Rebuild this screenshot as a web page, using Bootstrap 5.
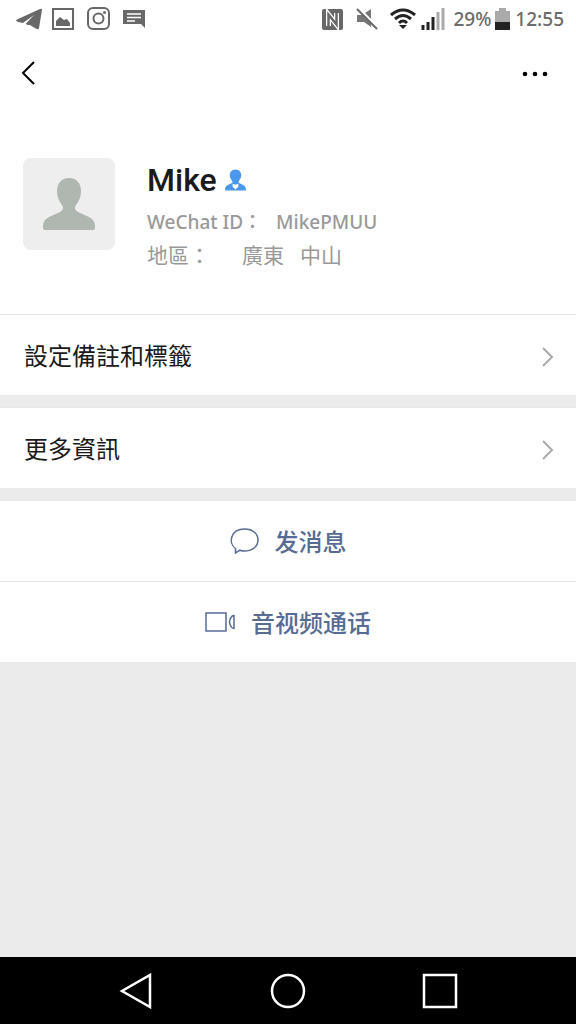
<!DOCTYPE html>
<html lang="zh-Hant">
<head>
<meta charset="utf-8">
<meta name="viewport" content="width=device-width, initial-scale=1">
<title>Mike</title>
<link href="https://cdn.jsdelivr.net/npm/bootstrap@5.3.0/dist/css/bootstrap.min.css" rel="stylesheet">
<style>
body{background:#ebebeb;color:#1a1a1a;font-family:Roboto,"Noto Sans CJK TC",sans-serif}
svg{display:block;flex:none}
.status{height:40px;padding:0 12px 2px 16px;color:#6b6b6b;font:500 19px/24px "Noto Sans",sans-serif}
.topbar{height:66px;padding:0 20px 0 12px}
.plain{border:0;background:none;padding:8px;color:#000}
.profile{padding:52px 24px 44px 23px;gap:32px}
.avatar{width:92px;height:92px;border-radius:8px;background:#eee}
.details{padding-top:2px}
.who{font-size:32px;line-height:40px;font-weight:500}
.facts{padding-top:6px;color:#999;font:500 19px/32px "Noto Sans","Noto Sans CJK TC",sans-serif}
.facts .wide{gap:14px}
.facts .region{font-family:"Noto Sans CJK TC",sans-serif;font-size:21px;font-weight:400}
.entry{height:81px;padding:4px 22px 0 24px;border-top:1px solid #e8e8e8;font-size:24px;color:#1a1a1a}
.act{height:81px;border:0;border-top:1px solid #e8e8e8;background:#fff;color:#576b95;font:500 24px/36px "Noto Sans CJK SC",sans-serif}
.gap-band{margin-top:12px}
.softkeys{height:67px;padding:0 60px}
</style>
</head>
<body>
<div class="min-vh-100 d-flex flex-column">
<header class="bg-white">
<div class="status d-flex align-items-center justify-content-between">
<div class="d-flex align-items-center gap-2">
<svg width="27" height="24" viewBox="0 0 27 24" fill="#686868"><path d="M0 13.500Q0 12.500 2 12L24 2q2-1 2 1l-3 18q-.5 2-2.500 1L14 18l-2 0-2.500-1L18 8 7 16 2 15Z"/></svg>
<svg width="24" height="24" viewBox="0 0 24 24"><path d="M2 2h20v20H2z" fill="none" stroke="#686868" stroke-width="2"/><path d="M5 19v-5l4-4 4 3 3-1 3 4v3z" fill="#686868"/></svg>
<svg class="ms-1" width="24" height="24" viewBox="0 0 24 24" fill="none" stroke="#686868" stroke-width="2"><rect x="1" y="1" width="21" height="21" rx="5"/><circle cx="11.500" cy="11.500" r="5"/><circle cx="17.500" cy="5.500" r="1.500" fill="#686868" stroke="none"/></svg>
<svg class="ms-1" width="24" height="24" viewBox="0 0 24 24"><path d="M0 3h22v18l-4-4H0z" fill="#686868"/><path d="M4 7h14M4 10.500h14M4 14h8" stroke="#fff" stroke-width="1.500"/></svg>
</div>
<div class="d-flex align-items-center">
<svg width="24" height="24" viewBox="0 0 24 24" fill="none"><rect x="1" y="2" width="21" height="21" rx="2" fill="#686868"/><path d="M7.500 19V7.500L15.500 17.500V6" stroke="#fff" stroke-width="5"/><path d="M7.500 19V7.500L15.500 17.500V6" stroke="#686868" stroke-width="2.500"/></svg>
<svg class="mx-2" width="28" height="24" viewBox="0 0 28 24"><path d="M4 8h5l9-6v18l-7-5H4z" fill="#777"/><path d="M5 1 26 22" stroke="#fff" stroke-width="3"/><path d="M4 2 24 22" stroke="#686868" stroke-width="2"/></svg>
<svg width="28" height="24" viewBox="0 0 28 24" fill="none" stroke="#222" stroke-width="3"><path d="M2 8Q14-2 26 8M6 12Q14 5 22 12M10 16Q14 12 18 16"/><path d="m10 18 4 4 4-4z" fill="#222" stroke="none"/></svg>
<svg class="ms-1" width="24" height="24" viewBox="0 0 24 24"><path d="M2 18v5M7 15v8M12 10v13" stroke="#222" stroke-width="3"/><path d="M17 5v18M22 1v22" stroke="#aaa" stroke-width="3"/></svg>
<span class="ms-2">29%</span>
<svg class="ms-1" width="16" height="24" viewBox="0 0 16 24"><path d="M0 4h4V1h7v3h4v12H0z" fill="#aaa"/><path d="M0 15h15v8H0z" fill="#222"/></svg>
<span class="ms-1">12:55</span>
</div>
</div>
<nav class="topbar d-flex align-items-center justify-content-between">
<button class="plain" aria-label="返回"><svg width="16" height="26" viewBox="0 0 16 26" fill="none" stroke="#000" stroke-width="2"><path d="M14 2 3 13l11 11"/></svg></button>
<button class="plain" aria-label="更多"><svg width="26" height="8" viewBox="0 0 26 8"><circle cx="3" cy="5" r="2.300"/><circle cx="13" cy="5" r="2.300"/><circle cx="23" cy="5" r="2.300"/></svg></button>
</nav>
</header>
<main>
<section class="profile bg-white d-flex align-items-start">
<div class="avatar d-flex align-items-center justify-content-center"><svg width="52" height="52" viewBox="0 0 52 52" fill="#b0b6b0"><path d="M26 0c8 0 12 6 12 13 0 6-2 10-5 14-2 3-1 5 2 7l11 5c4 2 6 5 6 9v2q0 2-2 2H2q-2 0-2-2v-2c0-4 2-7 6-9l11-5c3-2 4-4 2-7-3-4-5-8-5-14C14 6 18 0 26 0Z"/></svg></div>
<div class="details">
<div class="d-flex align-items-center gap-2"><h1 class="who m-0">Mike</h1><svg width="21" height="22" viewBox="0 0 22 22"><path d="M11 0c4 0 6 3 6 6 0 3-2 5-3 7 0 2 8 2 8 8 0 1 0 1-1 1H1q-1 0-1-1c0-6 8-6 8-8-1-2-3-4-3-7 0-3 2-6 6-6Z" fill="#4a98ee"/><path d="m8 15 3 1 3-1v3l-3 3-3-3z" fill="#fff"/></svg></div>
<div class="facts"><div class="wide d-flex"><span>WeChat ID：</span><span>MikePMUU</span></div>
<div class="region d-flex"><span>地區：</span><span class="ms-4 ps-2">廣東</span><span class="ms-3">中山</span></div></div>
</div>
</section>
<a href="#remark" class="entry bg-white d-flex align-items-center justify-content-between text-decoration-none"><span>設定備註和標籤</span><svg width="12" height="20" viewBox="0 0 12 20" fill="none" stroke="#aaa" stroke-width="2"><path d="m1 1 9 9-9 9"/></svg></a>
<a href="#more" class="entry gap-band bg-white d-flex align-items-center justify-content-between text-decoration-none"><span>更多資訊</span><svg width="12" height="20" viewBox="0 0 12 20" fill="none" stroke="#aaa" stroke-width="2"><path d="m1 1 9 9-9 9"/></svg></a>
<button class="act gap-band w-100 d-flex align-items-center justify-content-center gap-3"><svg width="29" height="26" viewBox="0 0 29 26" fill="none" stroke="#576b95" stroke-width="1.500"><path d="M5.500 20.500C-2 15 .5 1 14.500 1 23 1 28 6 28 12s-5 11-13.500 11q-2.500 0-4.500-.8L5.500 25Z"/></svg><span lang="zh-Hans">发消息</span></button>
<button class="act w-100 d-flex align-items-center justify-content-center gap-3"><svg width="30" height="20" viewBox="0 0 30 20" fill="none" stroke="#576b95" stroke-width="1.500"><path d="M1 1h20v18H1zM29 3.500v13q-2 0-3-2-3-4.500 0-9 1-2 3-2Z"/></svg><span lang="zh-Hans">音视频通话</span></button>
</main>
<footer class="softkeys mt-auto bg-black d-flex align-items-center">
<button class="plain flex-fill d-flex justify-content-center" aria-label="Back"><svg width="36" height="36" viewBox="0 0 36 36" fill="none" stroke="#fff" stroke-width="2.500"><path d="M32 2v32L4 18Z"/></svg></button>
<button class="plain flex-fill d-flex justify-content-center" aria-label="Home"><svg width="36" height="36" viewBox="0 0 36 36" fill="none" stroke="#fff" stroke-width="2.500"><circle cx="18" cy="18" r="16"/></svg></button>
<button class="plain flex-fill d-flex justify-content-center" aria-label="Recents"><svg width="36" height="36" viewBox="0 0 36 36" fill="none" stroke="#fff" stroke-width="2.500"><path d="M2 2h32v32H2z"/></svg></button>
</footer>
</div>
<script src="https://cdn.jsdelivr.net/npm/bootstrap@5.3.0/dist/js/bootstrap.bundle.min.js"></script>
</body>
</html>
